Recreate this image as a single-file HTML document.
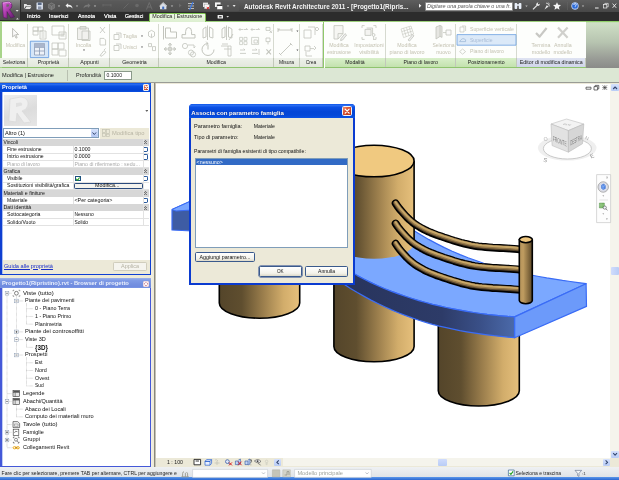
<!DOCTYPE html>
<html><head><meta charset="utf-8">
<style>
*{margin:0;padding:0;box-sizing:border-box}
html,body{width:619px;height:480px;overflow:hidden;background:#fff}
body{font-family:"Liberation Sans",sans-serif;font-size:5.6px;color:#111;position:relative}
.a{position:absolute}
.t{position:absolute;white-space:nowrap;line-height:7px;height:7px}
.g{color:#b9bdb4}
.w{color:#f2f2f2}
#title{left:0;top:0;width:619px;height:12px;background:linear-gradient(#5e5e5e,#474747)}
#tabs{left:0;top:12px;width:619px;height:10px;background:#2c2c2c}
#ribbon{left:0;top:21px;width:586px;height:37px;background:#fdfefc;border-top:1px solid #9ccf7c}
#ribR{left:586px;top:21px;width:33px;height:47px;background:linear-gradient(#8fcf68 0,#8fcf68 1px,#cfe0c6 1.6px,#b7c4b0 45%,#999c96 80%,#8a8b88 100%)}
#labels{left:0;top:58px;width:586px;height:10px;background:#e4e9df;border-bottom:1px solid #8fc46e}
#opts{left:0;top:68px;width:619px;height:15px;background:#dce7d4;border-bottom:1px solid #9a9c96}
#work{left:0;top:83px;width:619px;height:384px;background:#ece9d8}
#canvas{left:156px;top:84px;width:454px;height:374px;background:#fff}
#status{left:0;top:467px;width:619px;height:10.4px;background:linear-gradient(#eff1f3,#dfe3e7)}
.btn{background:linear-gradient(#fff,#f3f2ea 70%,#dcd8c8);border:.6px solid #3a5a8c;border-radius:1.6px}
#bline{left:0;top:477.2px;width:619px;height:2.8px;background:linear-gradient(#5b97ea,#2a66d0)}
#root{position:absolute;left:0;top:0;width:619px;height:480px;overflow:hidden;transform:translateZ(0);will-change:transform;background:transparent}
</style></head><body><div id="root">
<div class="a" id="title"></div>
<div class="a" id="tabs"></div>
<div class="a" id="ribbon"></div>
<div class="a" id="ribR"></div>
<div class="a" id="labels"></div>
<div class="a" id="opts"></div>
<div class="a" id="work"></div>
<div class="a" id="canvas"></div>
<!--SCENE-->
<svg class="a" style="left:0;top:0" width="619" height="480" viewBox="0 0 619 480">
<defs>
<linearGradient id="cy" x1="0" x2="1" y1="0" y2="0"><stop offset="0" stop-color="#54452a"/><stop offset=".28" stop-color="#5f4e2f"/><stop offset=".55" stop-color="#9c7f4d"/><stop offset=".8" stop-color="#d2ad6b"/><stop offset="1" stop-color="#e6c07c"/></linearGradient>
<linearGradient id="sd" gradientUnits="userSpaceOnUse" x1="340" x2="516" y1="0" y2="0"><stop offset="0" stop-color="#28345c"/><stop offset=".58" stop-color="#2d3b68"/><stop offset=".8" stop-color="#3a5088"/><stop offset="1" stop-color="#4c6bab"/></linearGradient>
<linearGradient id="po" x1="0" x2="1" y1="0" y2="0"><stop offset="0" stop-color="#b4925a"/><stop offset=".3" stop-color="#bf9c60"/><stop offset="1" stop-color="#5c4828"/></linearGradient>
<clipPath id="cv"><rect x="156" y="84" width="454.4" height="374"/></clipPath>

</defs>
<g clip-path="url(#cv)" stroke-linejoin="round">
<!-- slab left end -->
<path d="M172,209.5 L192,200.5 L192,231 L172,230 Z" fill="#3e5ca4" stroke="#3a6cf6" stroke-width="1.2"/>
<path d="M172,209.5 L192,200.5 L192,210 L176,211 Z" fill="#79a6ff" stroke="#3a6cf6" stroke-width="1"/>
<!-- cyl 1 -->
<path d="M219.3,270 L219.3,303 A40.2,15.2 0 0 0 299.7,303 L299.7,270 Z" fill="url(#cy)" stroke="#000" stroke-width="1.6"/>
<!-- cyl 2 lower -->
<path d="M333.9,270 L333.9,346.5 A40.1,15.2 0 0 0 414.1,346.5 L414.1,290 Z" fill="url(#cy)" stroke="#000" stroke-width="1.6"/>
<!-- cyl 3 -->
<path d="M438.3,310 L438.3,390.8 A40.5,15.2 0 0 0 519.3,390.8 L519.3,320 Z" fill="url(#cy)" stroke="#000" stroke-width="1.6"/>
<!-- slab top -->
<path d="M330.0,258.5 L336.8,263.2 L343.7,267.6 L350.5,271.8 L357.3,275.6 L364.2,279.2 L371.0,282.6 L377.8,285.7 L384.7,288.7 L391.5,291.4 L398.3,293.9 L405.2,296.3 L412.0,298.5 L418.8,300.6 L425.7,302.5 L432.5,304.3 L439.3,305.9 L446.2,307.5 L453.0,308.9 L459.8,310.2 L466.7,311.4 L473.5,312.5 L480.3,313.5 L487.2,314.4 L494.0,315.1 L500.8,315.8 L507.7,316.4 L514.5,316.8 L586.1,283.7 L578.2,282.6 L570.4,281.5 L562.5,280.4 L554.6,279.1 L546.7,277.9 L538.9,276.5 L531.0,275.0 L523.1,273.4 L515.2,271.7 L507.4,269.8 L499.5,267.8 L491.6,265.6 L483.7,263.2 L475.9,260.5 L468.0,257.7 L460.1,254.6 L452.2,251.2 L444.4,247.6 L436.5,243.6 L428.6,239.4 L420.7,234.8 L412.9,229.9 L405.0,224.6 L330,200 Z" fill="#7ba8ff" stroke="#3a6cf6" stroke-width="1.2"/>
<!-- slab side -->
<path d="M330.0,258.5 L336.8,263.2 L343.7,267.6 L350.5,271.8 L357.3,275.6 L364.2,279.2 L371.0,282.6 L377.8,285.7 L384.7,288.7 L391.5,291.4 L398.3,293.9 L405.2,296.3 L412.0,298.5 L418.8,300.6 L425.7,302.5 L432.5,304.3 L439.3,305.9 L446.2,307.5 L453.0,308.9 L459.8,310.2 L466.7,311.4 L473.5,312.5 L480.3,313.5 L487.2,314.4 L494.0,315.1 L500.8,315.8 L507.7,316.4 L514.5,316.8 L514.5,337.7 L507.7,337.1 L500.8,336.4 L494.0,335.7 L487.2,334.8 L480.3,333.9 L473.5,332.9 L466.7,331.8 L459.8,330.6 L453.0,329.2 L446.2,327.7 L439.3,326.1 L432.5,324.3 L425.7,322.3 L418.8,320.2 L412.0,317.9 L405.2,315.4 L398.3,312.7 L391.5,309.9 L384.7,306.8 L377.8,303.5 L371.0,300.1 L364.2,296.4 L357.3,292.5 L350.5,288.4 L343.7,284.0 L336.8,279.4 L330.0,274.6 Z" fill="url(#sd)" stroke="#3a6cf6" stroke-width="1.2"/>
<!-- slab end -->
<path d="M514.7,316.9 L586.1,283.7 L586.5,306.4 L514.7,337.8 Z" fill="#6c9afa" stroke="#3a6cf6" stroke-width="1.2"/>
<!-- cyl 2 upper -->
<path d="M333.9,161 L333.9,243 A40.1,15.8 0 0 0 414.1,243 L414.1,161 Z" fill="url(#cy)"/><path d="M333.9,161 V243.5 M414.1,161 V243.5" stroke="#000" stroke-width="1.6"/>
<ellipse cx="374" cy="161" rx="40.1" ry="15.8" fill="#f0c980" stroke="#000" stroke-width="1.6"/>
<!-- rails -->
<g fill="none" stroke-linecap="round">
<g transform="translate(0,0.0)"><path d="M395.6,203.3 L397.6,206.3 L399.7,209.1 L402.0,211.8 L404.4,214.5 L406.8,217.1 L409.4,219.6 L412.1,221.9 L414.9,224.1 L417.9,226.0 L421.0,227.8 L424.1,229.5 L427.3,231.1 L430.6,232.5 L433.9,233.8 L437.2,235.1 L440.6,236.2 L443.9,237.4 L447.3,238.5 L450.7,239.6 L454.1,240.7 L457.5,241.7 L460.9,242.7 L464.4,243.6 L467.9,244.4 L471.3,245.2 L474.8,245.8 L478.4,246.3 L481.9,246.7 L485.4,247.0 L489.0,247.3 L492.6,247.6 L496.1,247.8 L499.7,248.0 L503.3,248.2 L506.8,248.4 L510.4,248.6 L513.9,248.9 L517.5,249.2 L521.0,249.6" stroke="#000" stroke-width="7.8"/><path d="M395.6,203.3 L397.6,206.3 L399.7,209.1 L402.0,211.8 L404.4,214.5 L406.8,217.1 L409.4,219.6 L412.1,221.9 L414.9,224.1 L417.9,226.0 L421.0,227.8 L424.1,229.5 L427.3,231.1 L430.6,232.5 L433.9,233.8 L437.2,235.1 L440.6,236.2 L443.9,237.4 L447.3,238.5 L450.7,239.6 L454.1,240.7 L457.5,241.7 L460.9,242.7 L464.4,243.6 L467.9,244.4 L471.3,245.2 L474.8,245.8 L478.4,246.3 L481.9,246.7 L485.4,247.0 L489.0,247.3 L492.6,247.6 L496.1,247.8 L499.7,248.0 L503.3,248.2 L506.8,248.4 L510.4,248.6 L513.9,248.9 L517.5,249.2 L521.0,249.6" stroke="#54422a" stroke-width="4.9" transform="translate(0,-0.3)"/><path d="M395.6,203.3 L397.6,206.3 L399.7,209.1 L402.0,211.8 L404.4,214.5 L406.8,217.1 L409.4,219.6 L412.1,221.9 L414.9,224.1 L417.9,226.0 L421.0,227.8 L424.1,229.5 L427.3,231.1 L430.6,232.5 L433.9,233.8 L437.2,235.1 L440.6,236.2 L443.9,237.4 L447.3,238.5 L450.7,239.6 L454.1,240.7 L457.5,241.7 L460.9,242.7 L464.4,243.6 L467.9,244.4 L471.3,245.2 L474.8,245.8 L478.4,246.3 L481.9,246.7 L485.4,247.0 L489.0,247.3 L492.6,247.6 L496.1,247.8 L499.7,248.0 L503.3,248.2 L506.8,248.4 L510.4,248.6 L513.9,248.9 L517.5,249.2 L521.0,249.6" stroke="#96794a" stroke-width="3.5" transform="translate(0,-0.8)"/><path d="M395.6,203.3 L397.6,206.3 L399.7,209.1 L402.0,211.8 L404.4,214.5 L406.8,217.1 L409.4,219.6 L412.1,221.9 L414.9,224.1 L417.9,226.0 L421.0,227.8 L424.1,229.5 L427.3,231.1 L430.6,232.5 L433.9,233.8 L437.2,235.1 L440.6,236.2 L443.9,237.4 L447.3,238.5 L450.7,239.6 L454.1,240.7 L457.5,241.7 L460.9,242.7 L464.4,243.6 L467.9,244.4 L471.3,245.2 L474.8,245.8 L478.4,246.3 L481.9,246.7 L485.4,247.0 L489.0,247.3 L492.6,247.6 L496.1,247.8 L499.7,248.0 L503.3,248.2 L506.8,248.4 L510.4,248.6 L513.9,248.9 L517.5,249.2 L521.0,249.6" stroke="#c8a768" stroke-width="1.8" transform="translate(0,-1.4)"/></g>
<g transform="translate(0,20.2)"><path d="M395.6,203.3 L397.6,206.3 L399.7,209.1 L402.0,211.8 L404.4,214.5 L406.8,217.1 L409.4,219.6 L412.1,221.9 L414.9,224.1 L417.9,226.0 L421.0,227.8 L424.1,229.5 L427.3,231.1 L430.6,232.5 L433.9,233.8 L437.2,235.1 L440.6,236.2 L443.9,237.4 L447.3,238.5 L450.7,239.6 L454.1,240.7 L457.5,241.7 L460.9,242.7 L464.4,243.6 L467.9,244.4 L471.3,245.2 L474.8,245.8 L478.4,246.3 L481.9,246.7 L485.4,247.0 L489.0,247.3 L492.6,247.6 L496.1,247.8 L499.7,248.0 L503.3,248.2 L506.8,248.4 L510.4,248.6 L513.9,248.9 L517.5,249.2 L521.0,249.6" stroke="#000" stroke-width="7.8"/><path d="M395.6,203.3 L397.6,206.3 L399.7,209.1 L402.0,211.8 L404.4,214.5 L406.8,217.1 L409.4,219.6 L412.1,221.9 L414.9,224.1 L417.9,226.0 L421.0,227.8 L424.1,229.5 L427.3,231.1 L430.6,232.5 L433.9,233.8 L437.2,235.1 L440.6,236.2 L443.9,237.4 L447.3,238.5 L450.7,239.6 L454.1,240.7 L457.5,241.7 L460.9,242.7 L464.4,243.6 L467.9,244.4 L471.3,245.2 L474.8,245.8 L478.4,246.3 L481.9,246.7 L485.4,247.0 L489.0,247.3 L492.6,247.6 L496.1,247.8 L499.7,248.0 L503.3,248.2 L506.8,248.4 L510.4,248.6 L513.9,248.9 L517.5,249.2 L521.0,249.6" stroke="#54422a" stroke-width="4.9" transform="translate(0,-0.3)"/><path d="M395.6,203.3 L397.6,206.3 L399.7,209.1 L402.0,211.8 L404.4,214.5 L406.8,217.1 L409.4,219.6 L412.1,221.9 L414.9,224.1 L417.9,226.0 L421.0,227.8 L424.1,229.5 L427.3,231.1 L430.6,232.5 L433.9,233.8 L437.2,235.1 L440.6,236.2 L443.9,237.4 L447.3,238.5 L450.7,239.6 L454.1,240.7 L457.5,241.7 L460.9,242.7 L464.4,243.6 L467.9,244.4 L471.3,245.2 L474.8,245.8 L478.4,246.3 L481.9,246.7 L485.4,247.0 L489.0,247.3 L492.6,247.6 L496.1,247.8 L499.7,248.0 L503.3,248.2 L506.8,248.4 L510.4,248.6 L513.9,248.9 L517.5,249.2 L521.0,249.6" stroke="#96794a" stroke-width="3.5" transform="translate(0,-0.8)"/><path d="M395.6,203.3 L397.6,206.3 L399.7,209.1 L402.0,211.8 L404.4,214.5 L406.8,217.1 L409.4,219.6 L412.1,221.9 L414.9,224.1 L417.9,226.0 L421.0,227.8 L424.1,229.5 L427.3,231.1 L430.6,232.5 L433.9,233.8 L437.2,235.1 L440.6,236.2 L443.9,237.4 L447.3,238.5 L450.7,239.6 L454.1,240.7 L457.5,241.7 L460.9,242.7 L464.4,243.6 L467.9,244.4 L471.3,245.2 L474.8,245.8 L478.4,246.3 L481.9,246.7 L485.4,247.0 L489.0,247.3 L492.6,247.6 L496.1,247.8 L499.7,248.0 L503.3,248.2 L506.8,248.4 L510.4,248.6 L513.9,248.9 L517.5,249.2 L521.0,249.6" stroke="#c8a768" stroke-width="1.8" transform="translate(0,-1.4)"/></g>
<g transform="translate(0,40.4)"><path d="M395.6,203.3 L397.6,206.3 L399.7,209.1 L402.0,211.8 L404.4,214.5 L406.8,217.1 L409.4,219.6 L412.1,221.9 L414.9,224.1 L417.9,226.0 L421.0,227.8 L424.1,229.5 L427.3,231.1 L430.6,232.5 L433.9,233.8 L437.2,235.1 L440.6,236.2 L443.9,237.4 L447.3,238.5 L450.7,239.6 L454.1,240.7 L457.5,241.7 L460.9,242.7 L464.4,243.6 L467.9,244.4 L471.3,245.2 L474.8,245.8 L478.4,246.3 L481.9,246.7 L485.4,247.0 L489.0,247.3 L492.6,247.6 L496.1,247.8 L499.7,248.0 L503.3,248.2 L506.8,248.4 L510.4,248.6 L513.9,248.9 L517.5,249.2 L521.0,249.6" stroke="#000" stroke-width="7.8"/><path d="M395.6,203.3 L397.6,206.3 L399.7,209.1 L402.0,211.8 L404.4,214.5 L406.8,217.1 L409.4,219.6 L412.1,221.9 L414.9,224.1 L417.9,226.0 L421.0,227.8 L424.1,229.5 L427.3,231.1 L430.6,232.5 L433.9,233.8 L437.2,235.1 L440.6,236.2 L443.9,237.4 L447.3,238.5 L450.7,239.6 L454.1,240.7 L457.5,241.7 L460.9,242.7 L464.4,243.6 L467.9,244.4 L471.3,245.2 L474.8,245.8 L478.4,246.3 L481.9,246.7 L485.4,247.0 L489.0,247.3 L492.6,247.6 L496.1,247.8 L499.7,248.0 L503.3,248.2 L506.8,248.4 L510.4,248.6 L513.9,248.9 L517.5,249.2 L521.0,249.6" stroke="#54422a" stroke-width="4.9" transform="translate(0,-0.3)"/><path d="M395.6,203.3 L397.6,206.3 L399.7,209.1 L402.0,211.8 L404.4,214.5 L406.8,217.1 L409.4,219.6 L412.1,221.9 L414.9,224.1 L417.9,226.0 L421.0,227.8 L424.1,229.5 L427.3,231.1 L430.6,232.5 L433.9,233.8 L437.2,235.1 L440.6,236.2 L443.9,237.4 L447.3,238.5 L450.7,239.6 L454.1,240.7 L457.5,241.7 L460.9,242.7 L464.4,243.6 L467.9,244.4 L471.3,245.2 L474.8,245.8 L478.4,246.3 L481.9,246.7 L485.4,247.0 L489.0,247.3 L492.6,247.6 L496.1,247.8 L499.7,248.0 L503.3,248.2 L506.8,248.4 L510.4,248.6 L513.9,248.9 L517.5,249.2 L521.0,249.6" stroke="#96794a" stroke-width="3.5" transform="translate(0,-0.8)"/><path d="M395.6,203.3 L397.6,206.3 L399.7,209.1 L402.0,211.8 L404.4,214.5 L406.8,217.1 L409.4,219.6 L412.1,221.9 L414.9,224.1 L417.9,226.0 L421.0,227.8 L424.1,229.5 L427.3,231.1 L430.6,232.5 L433.9,233.8 L437.2,235.1 L440.6,236.2 L443.9,237.4 L447.3,238.5 L450.7,239.6 L454.1,240.7 L457.5,241.7 L460.9,242.7 L464.4,243.6 L467.9,244.4 L471.3,245.2 L474.8,245.8 L478.4,246.3 L481.9,246.7 L485.4,247.0 L489.0,247.3 L492.6,247.6 L496.1,247.8 L499.7,248.0 L503.3,248.2 L506.8,248.4 L510.4,248.6 L513.9,248.9 L517.5,249.2 L521.0,249.6" stroke="#c8a768" stroke-width="1.8" transform="translate(0,-1.4)"/></g>
</g>
<!-- post -->
<path d="M519.3,239.6 L519.3,300.6 A6.5,3.1 0 0 0 532.3,300.6 L532.3,239.6 Z" fill="url(#po)" stroke="#000" stroke-width="1.6"/>
<ellipse cx="525.8" cy="239.6" rx="6.5" ry="3.1" fill="#eec67e" stroke="#000" stroke-width="1.6"/>
</g>
</svg>
<!--/SCENE-->
<!--LEFT-->
<div class="a" style="left:0;top:83px;width:151.4px;height:192.4px;background:#0f3fd2"></div>
<div class="a" style="left:0;top:83px;width:151.5px;height:9px;background:linear-gradient(#0b55e6,#2a6cf0 15%,#0a4fe0 35%,#0344d4 80%,#0a50e2)"></div>
<div class="a" style="left:2px;top:92px;width:148px;height:182px;background:#fff;border-left:.8px solid #a9bdf0"></div>
<div class="a" style="left:2.8px;top:260.3px;width:147.2px;height:13.7px;background:#ece9d8"></div>
<div class="a" style="left:142.6px;top:84.2px;width:6.8px;height:6.6px;border-radius:1px;background:linear-gradient(135deg,#ee9072,#d84e2c 45%,#b8381a);border:.5px solid #f0f0f0"></div>
<svg class="a" style="left:142.6px;top:84.2px" width="6.8" height="6.6" viewBox="0 0 6.8 6.6"><path d="M2,1.9 L4.8,4.7 M4.8,1.9 L2,4.7" stroke="#fff" stroke-width="1.2" stroke-linecap="round"/></svg>
<div class="a" style="left:4px;top:94.5px;width:32.8px;height:31.5px;background:linear-gradient(160deg,#eeeeee,#dcdcdc 55%,#e6e6e6)"></div>
<svg class="a" style="left:4px;top:94.5px" width="32.8" height="31.5" viewBox="0 0 32.8 31.5"><path d="M6,4 L17,2 Q25,3 24,10 Q23,15 18,16 L27,27 L20,28 L13,18 L12,27 L5,26 Z" fill="#efefef" stroke="#d8d8d8" stroke-width=".7"/><path d="M12,8 L17,7.5 Q19,8.5 18,10.5 L12,12 Z" fill="#e0e0e0"/></svg>
<svg class="a" style="left:144.5px;top:109.6px" width="3.6" height="2.4" viewBox="0 0 3.6 2.4"><path d="M.3,0 L3.3,0 L1.8,1.9 Z" fill="#666"/></svg>
<div class="a" style="left:3px;top:128px;width:96px;height:10.2px;background:#fff;border:.6px solid #7f9db9"></div>
<div class="a" style="left:91px;top:129px;width:7.4px;height:8.2px;border-radius:1px;background:linear-gradient(#d6e2fc,#b4c8f4)"></div>
<svg class="a" style="left:92.4px;top:131.6px" width="4.6" height="3.2" viewBox="0 0 4.6 3.2"><path d="M.5,.5 L2.3,2.5 L4.1,.5" fill="none" stroke="#33466e" stroke-width="1"/></svg>
<div class="a" style="left:100px;top:127.5px;width:49px;height:11px;background:#ece9d8"></div>
<svg class="a" style="left:102.4px;top:129px" width="8" height="8" viewBox="0 0 8 8"><g fill="none" stroke="#c4c2b2" stroke-width=".7"><rect x=".5" y=".5" width="3" height="3"/><rect x="4.3" y=".5" width="3" height="4"/><rect x=".5" y="4.3" width="3" height="3"/><rect x="4.3" y="5.2" width="3" height="2.2"/></g></svg>
<div class="a" style="left:3px;top:138.75px;width:145.6px;height:87.00px;background:#fff"></div>
<div class="a" style="left:3px;top:138.75px;width:145.6px;height:7.25px;background:#d7d7d7"></div>
<svg class="a" style="left:143.6px;top:140.25px" width="3" height="4.4" viewBox="0 0 3 4.4"><path d="M.2,2 L1.5,.5 L2.8,2 M.2,4 L1.5,2.5 L2.8,4" fill="none" stroke="#222" stroke-width=".6"/></svg>
<div class="a" style="left:3px;top:152.75px;width:145.6px;height:.5px;background:#e2e2e2"></div>
<div class="a" style="left:143.6px;top:146.80px;width:4.6px;height:5.6px;background:#fff;border:.7px solid #2a5a9c;border-left:none;border-radius:0 1.8px 1.8px 0"></div>
<div class="a" style="left:3px;top:160.00px;width:145.6px;height:.5px;background:#e2e2e2"></div>
<div class="a" style="left:143.6px;top:154.05px;width:4.6px;height:5.6px;background:#fff;border:.7px solid #2a5a9c;border-left:none;border-radius:0 1.8px 1.8px 0"></div>
<div class="a" style="left:3px;top:167.25px;width:145.6px;height:.5px;background:#e2e2e2"></div>
<div class="a" style="left:3px;top:167.75px;width:145.6px;height:7.25px;background:#d7d7d7"></div>
<svg class="a" style="left:143.6px;top:169.25px" width="3" height="4.4" viewBox="0 0 3 4.4"><path d="M.2,2 L1.5,.5 L2.8,2 M.2,4 L1.5,2.5 L2.8,4" fill="none" stroke="#222" stroke-width=".6"/></svg>
<div class="a" style="left:3px;top:181.75px;width:145.6px;height:.5px;background:#e2e2e2"></div>
<div class="a" style="left:74.8px;top:175.70px;width:5.8px;height:5.8px;background:#fff;border:.6px solid #1c5180"></div>
<svg class="a" style="left:74.8px;top:175.70px" width="5.8" height="5.8" viewBox="0 0 5.8 5.8"><path d="M1.3,2.9 L2.5,4.3 L4.6,1.5" fill="none" stroke="#21a121" stroke-width="1.1"/></svg>
<div class="a" style="left:143.6px;top:175.80px;width:4.6px;height:5.6px;background:#fff;border:.7px solid #2a5a9c;border-left:none;border-radius:0 1.8px 1.8px 0"></div>
<div class="a" style="left:3px;top:189.00px;width:145.6px;height:.5px;background:#e2e2e2"></div>
<div class="a" style="left:74px;top:182.95px;width:68.5px;height:5.9px;background:#f4f3ee;border:.6px solid #2a4a7c;border-radius:1.2px"></div>
<div class="a" style="left:3px;top:189.50px;width:145.6px;height:7.25px;background:#d7d7d7"></div>
<svg class="a" style="left:143.6px;top:191.00px" width="3" height="4.4" viewBox="0 0 3 4.4"><path d="M.2,2 L1.5,.5 L2.8,2 M.2,4 L1.5,2.5 L2.8,4" fill="none" stroke="#222" stroke-width=".6"/></svg>
<div class="a" style="left:3px;top:203.50px;width:145.6px;height:.5px;background:#e2e2e2"></div>
<div class="a" style="left:143.6px;top:197.55px;width:4.6px;height:5.6px;background:#fff;border:.7px solid #2a5a9c;border-left:none;border-radius:0 1.8px 1.8px 0"></div>
<div class="a" style="left:3px;top:204.00px;width:145.6px;height:7.25px;background:#d7d7d7"></div>
<svg class="a" style="left:143.6px;top:205.50px" width="3" height="4.4" viewBox="0 0 3 4.4"><path d="M.2,2 L1.5,.5 L2.8,2 M.2,4 L1.5,2.5 L2.8,4" fill="none" stroke="#222" stroke-width=".6"/></svg>
<div class="a" style="left:3px;top:218.00px;width:145.6px;height:.5px;background:#e2e2e2"></div>
<div class="a" style="left:3px;top:225.25px;width:145.6px;height:.5px;background:#e2e2e2"></div>
<div class="a" style="left:73.2px;top:138.75px;width:.5px;height:87.00px;background:#e2e2e2"></div>
<div class="a" style="left:73px;top:138.75px;width:1px;height:7.25px;background:#d7d7d7"></div>
<div class="a" style="left:73px;top:167.75px;width:1px;height:7.25px;background:#d7d7d7"></div>
<div class="a" style="left:73px;top:189.50px;width:1px;height:7.25px;background:#d7d7d7"></div>
<div class="a" style="left:73px;top:204.00px;width:1px;height:7.25px;background:#d7d7d7"></div>
<div class="a" style="left:142.8px;top:138.75px;width:.5px;height:87.00px;background:#e2e2e2"></div>
<div class="a" style="left:113px;top:262px;width:34px;height:8.6px;background:#f5f4ee;border:.6px solid #d0cdbd;border-radius:1.2px"></div>
<div class="a" style="left:0;top:278.2px;width:151.4px;height:188.8px;background:#4458d8"></div>
<div class="a" style="left:0;top:278.2px;width:151.4px;height:10.2px;background:linear-gradient(#9db2ea,#7f9be6 22%,#7490e0 60%,#6f8be0 85%,#7a96e4)"></div>
<div class="a" style="left:2px;top:288.4px;width:148px;height:178px;background:#fff;border-left:.8px solid #c0ccf4"></div>
<div class="a" style="left:143px;top:281.2px;width:5.8px;height:5.6px;border-radius:1px;background:#c67a8c;border:.4px solid #ecd8e0"></div>
<svg class="a" style="left:143px;top:281.2px" width="5.8" height="5.6" viewBox="0 0 5.8 5.6"><path d="M1.5,1.4 L4.4,4.3 M4.4,1.4 L1.5,4.3" stroke="#fff" stroke-width="1.2" stroke-linecap="round"/></svg>
<svg class="a" style="left:0;top:0" width="152" height="480" viewBox="0 0 152 480"><g stroke="#9a9a9a" stroke-width=".5" stroke-dasharray=".6 .6" fill="none"><path d="M7,295.25 V447.75"/><path d="M16.5,296.25 V355.05"/><path d="M26.5,302.98 V324.15"/><path d="M26.5,341.60 V347.32"/><path d="M26.5,357.05 V385.95"/><path d="M16.5,404.40 V416.85"/><path d="M7,293.25 H12"/><path d="M16.5,300.98 H23.5"/><path d="M26.5,308.70 H33.5"/><path d="M26.5,316.43 H33.5"/><path d="M26.5,324.15 H33.5"/><path d="M16.5,331.88 H23.5"/><path d="M16.5,339.60 H23.5"/><path d="M26.5,347.32 H33.5"/><path d="M16.5,355.05 H23.5"/><path d="M26.5,362.77 H33.5"/><path d="M26.5,370.50 H33.5"/><path d="M26.5,378.23 H33.5"/><path d="M26.5,385.95 H33.5"/><path d="M7,393.68 H12"/><path d="M7,401.40 H12"/><path d="M16.5,409.12 H23.5"/><path d="M16.5,416.85 H23.5"/><path d="M7,424.57 H12"/><path d="M7,432.30 H12"/><path d="M7,440.02 H12"/><path d="M7,447.75 H12"/></g><rect x="5.20" y="291.45" width="3.6" height="3.6" fill="#fff" stroke="#8a9ab0" stroke-width=".5"/><path d="M6.00,293.25 h2" stroke="#111" stroke-width=".5"/><circle cx="16.4" cy="293.25" r="1.9" fill="#fff" stroke="#333" stroke-width=".6"/><path d="M13,290.25 h1.2 M18.6,290.25 h1.2 M13,296.25 h1.2 M18.6,296.25 h1.2 M13,290.25 v1 M19.8,290.25 v1 M13,295.25 v1 M19.8,295.25 v1" stroke="#444" stroke-width=".5"/><rect x="14.70" y="299.18" width="3.6" height="3.6" fill="#fff" stroke="#8a9ab0" stroke-width=".5"/><path d="M15.50,300.98 h2" stroke="#111" stroke-width=".5"/><rect x="14.70" y="330.07" width="3.6" height="3.6" fill="#fff" stroke="#8a9ab0" stroke-width=".5"/><path d="M15.50,331.88 h2" stroke="#111" stroke-width=".5"/><path d="M16.50,330.88 v2" stroke="#111" stroke-width=".5"/><rect x="14.70" y="337.80" width="3.6" height="3.6" fill="#fff" stroke="#8a9ab0" stroke-width=".5"/><path d="M15.50,339.60 h2" stroke="#111" stroke-width=".5"/><rect x="14.70" y="353.25" width="3.6" height="3.6" fill="#fff" stroke="#8a9ab0" stroke-width=".5"/><path d="M15.50,355.05 h2" stroke="#111" stroke-width=".5"/><rect x="13" y="390.68" width="6.6" height="6" fill="#e8e8e8" stroke="#333" stroke-width=".6"/><path d="M13,392.48 h6.6 M15.2,392.48 v4.2" stroke="#333" stroke-width=".5"/><rect x="13.3" y="390.88" width="6" height="1.4" fill="#555"/><rect x="5.20" y="399.60" width="3.6" height="3.6" fill="#fff" stroke="#8a9ab0" stroke-width=".5"/><path d="M6.00,401.40 h2" stroke="#111" stroke-width=".5"/><rect x="13" y="398.40" width="6.6" height="6" fill="#e8e8e8" stroke="#333" stroke-width=".6"/><path d="M13,400.20 h6.6 M15.2,400.20 v4.2" stroke="#333" stroke-width=".5"/><rect x="13.3" y="398.60" width="6" height="1.4" fill="#555"/><path d="M13,421.57 h4.6 l2,1.8 v4.2 h-6.6 Z" fill="#eee" stroke="#333" stroke-width=".6"/><path d="M14.5,423.97 h3.6 v2.4 h-3.6 Z" fill="none" stroke="#555" stroke-width=".4"/><rect x="5.20" y="430.50" width="3.6" height="3.6" fill="#fff" stroke="#8a9ab0" stroke-width=".5"/><path d="M6.00,432.30 h2" stroke="#111" stroke-width=".5"/><path d="M7.00,431.30 v2" stroke="#111" stroke-width=".5"/><rect x="13.2" y="429.20" width="5.6" height="6.2" fill="#fff" stroke="#333" stroke-width=".6"/><path d="M14.4,432.90 l1.2,-1.6 l1.8,.4" fill="none" stroke="#333" stroke-width=".6"/><rect x="5.20" y="438.22" width="3.6" height="3.6" fill="#fff" stroke="#8a9ab0" stroke-width=".5"/><path d="M6.00,440.02 h2" stroke="#111" stroke-width=".5"/><path d="M7.00,439.02 v2" stroke="#111" stroke-width=".5"/><path d="M13.4,437.02 h1.2 M13.4,437.02 v1.2 M19,437.02 h-1.2 M19,437.02 v1.2 M13.4,443.02 h1.2 M13.4,443.02 v-1.2 M19,443.02 h-1.2 M19,443.02 v-1.2" stroke="#333" stroke-width=".6" fill="none"/><circle cx="16" cy="439.72" r="1.5" fill="none" stroke="#444" stroke-width=".6"/><path d="M17,440.82 l1.4,1.6" stroke="#444" stroke-width=".6"/><ellipse cx="14.6" cy="447.75" rx="1.6" ry="1.1" fill="none" stroke="#e8a000" stroke-width=".9"/><ellipse cx="17.8" cy="447.75" rx="1.6" ry="1.1" fill="none" stroke="#e8a000" stroke-width=".9"/><path d="M15,447.75 h2.6" stroke="#b87800" stroke-width=".7"/></svg>
<div class="t" style="left:2.00px;top:83.90px;font-size:5.69px;font-weight:bold;color:#fff;">Proprietà</div>
<div class="t" style="left:5.00px;top:129.60px;font-size:5.62px;">Altro (1)</div>
<div class="t" style="left:112.00px;top:129.60px;font-size:5.79px;color:#b8b5a4;">Modifica tipo</div>
<div class="t" style="left:3.50px;top:138.78px;font-size:4.95px;">Vincoli</div>
<div class="t" style="left:7.00px;top:146.03px;font-size:5.05px;">Fine estrusione</div>
<div class="t" style="left:74.50px;top:146.03px;font-size:5.23px;">0.1000</div>
<div class="t" style="left:7.00px;top:153.28px;font-size:5.09px;">Inizio estrusione</div>
<div class="t" style="left:74.50px;top:153.28px;font-size:5.23px;">0.0000</div>
<div class="t" style="left:7.00px;top:160.53px;font-size:4.99px;color:#aaa;">Piano di lavoro</div>
<div class="t" style="left:74.50px;top:160.53px;font-size:5.26px;color:#aaa;">Piano di riferimento : sedu...</div>
<div class="t" style="left:3.50px;top:167.78px;font-size:5.12px;">Grafica</div>
<div class="t" style="left:7.00px;top:175.03px;font-size:4.92px;">Visibile</div>
<div class="t" style="left:7.00px;top:182.28px;font-size:5.13px;">Sostituzioni visibilità/grafica</div>
<div class="t" style="left:95.00px;top:182.08px;font-size:5.38px;">Modifica...</div>
<div class="t" style="left:3.50px;top:189.53px;font-size:5.26px;">Materiali e finiture</div>
<div class="t" style="left:7.00px;top:196.78px;font-size:4.98px;">Materiale</div>
<div class="t" style="left:74.50px;top:196.78px;font-size:5.34px;">&lt;Per categoria&gt;</div>
<div class="t" style="left:3.50px;top:204.03px;font-size:5.25px;">Dati identità</div>
<div class="t" style="left:7.00px;top:211.28px;font-size:5.19px;">Sottocategoria</div>
<div class="t" style="left:74.50px;top:211.28px;font-size:4.90px;">Nessuno</div>
<div class="t" style="left:7.00px;top:218.53px;font-size:5.06px;">Solido/Vuoto</div>
<div class="t" style="left:74.50px;top:218.53px;font-size:4.90px;">Solido</div>
<div class="t" style="left:4.00px;top:262.65px;font-size:5.61px;color:#1a2fc8;text-decoration:underline;">Guida alle proprietà</div>
<div class="t" style="left:121.00px;top:262.80px;font-size:5.49px;color:#b4b1a2;">Applica</div>
<div class="t" style="left:2.00px;top:280.40px;font-size:5.79px;font-weight:bold;color:#e8eefc;">Progetto1(Ripristino).rvt - Browser di progetto</div>
<div class="t" style="left:23.00px;top:289.65px;font-size:6.03px;">Viste (tutto)</div>
<div class="t" style="left:25.00px;top:297.38px;font-size:5.50px;">Piante dei pavimenti</div>
<div class="t" style="left:35.00px;top:305.10px;font-size:5.35px;">0 - Piano Terra</div>
<div class="t" style="left:35.00px;top:312.82px;font-size:5.26px;">1 - Piano Primo</div>
<div class="t" style="left:35.00px;top:320.55px;font-size:5.35px;">Planimetria</div>
<div class="t" style="left:25.00px;top:328.27px;font-size:5.82px;">Piante dei controsoffitti</div>
<div class="t" style="left:25.00px;top:336.00px;font-size:5.51px;">Viste 3D</div>
<div class="t" style="left:35.00px;top:343.72px;font-size:6.30px;font-weight:bold;">{3D}</div>
<div class="t" style="left:25.00px;top:351.45px;font-size:5.70px;">Prospetti</div>
<div class="t" style="left:35.00px;top:359.17px;font-size:5.19px;">Est</div>
<div class="t" style="left:35.00px;top:366.90px;font-size:5.42px;">Nord</div>
<div class="t" style="left:35.00px;top:374.62px;font-size:5.45px;">Ovest</div>
<div class="t" style="left:35.00px;top:382.35px;font-size:4.92px;">Sud</div>
<div class="t" style="left:23.00px;top:390.07px;font-size:5.52px;">Legende</div>
<div class="t" style="left:23.00px;top:397.80px;font-size:5.55px;">Abachi/Quantità</div>
<div class="t" style="left:25.00px;top:405.52px;font-size:5.55px;">Abaco dei Locali</div>
<div class="t" style="left:25.00px;top:413.25px;font-size:5.60px;">Computo dei materiali muro</div>
<div class="t" style="left:23.00px;top:420.97px;font-size:5.97px;">Tavole (tutto)</div>
<div class="t" style="left:23.00px;top:428.70px;font-size:5.49px;">Famiglie</div>
<div class="t" style="left:23.00px;top:436.42px;font-size:5.66px;">Gruppi</div>
<div class="t" style="left:23.00px;top:444.15px;font-size:5.51px;">Collegamenti Revit</div>
<!--/LEFT-->
<!--DIALOG-->
<div class="a" id="dlg" style="left:189px;top:104px;width:166px;height:180.5px;background:#0b3bd0;border-radius:4px 4px 0 0">
<div class="a" style="left:0;top:0;width:166px;height:14px;border-radius:4px 4px 0 0;background:linear-gradient(#0d55ea 0%,#2a6df2 10%,#0b50e4 24%,#0345d6 55%,#0347d8 80%,#0a52e4 100%)"></div>
<div class="a" style="left:1.7px;top:13.6px;width:162.6px;height:165.2px;background:#ece9d8"></div>
<div class="a" style="left:153px;top:2.3px;width:10.3px;height:10.2px;border-radius:1.6px;background:linear-gradient(135deg,#ee9072,#d84e2c 45%,#b8381a);border:.6px solid #f4f4f4"></div>
<svg class="a" style="left:153px;top:2.3px" width="10.3" height="10.2" viewBox="0 0 10.3 10.2"><path d="M3.2,3.1 L7.1,7.1 M7.1,3.1 L3.2,7.1" stroke="#fff" stroke-width="1.3" stroke-linecap="round"/></svg>
<div class="a" style="left:5.6px;top:54px;width:153.8px;height:89.7px;background:#fff;border:.6px solid #7f9db9"></div>
<div class="a" style="left:6.6px;top:55.3px;width:151.8px;height:5.8px;background:#316ac5"></div>
<div class="a btn" style="left:6px;top:147.6px;width:60px;height:10.8px"></div>
<div class="a btn" style="left:70px;top:162.3px;width:42.5px;height:10.7px;box-shadow:0 0 0 .5px #1c3f8a"></div>
<div class="a btn" style="left:116px;top:162.3px;width:43px;height:10.7px"></div>
<div class="t" style="left:2.30px;top:4.60px;font-size:6.14px;font-weight:bold;color:#fff;text-shadow:.4px .4px 0 #0a2a8a;">Associa con parametro famiglia</div>
<div class="t" style="left:5.00px;top:19.40px;font-size:5.57px;">Parametro famiglia:</div>
<div class="t" style="left:64.70px;top:19.40px;font-size:5.15px;">Materiale</div>
<div class="t" style="left:5.00px;top:29.80px;font-size:5.51px;">Tipo di parametro:</div>
<div class="t" style="left:64.70px;top:29.80px;font-size:5.15px;">Materiale</div>
<div class="t" style="left:5.00px;top:44.20px;font-size:5.18px;">Parametri di famiglia esistenti di tipo compatibile:</div>
<div class="t" style="left:7.60px;top:54.70px;font-size:5.31px;color:#fff;">&lt;nessuno&gt;</div>
<div class="t" style="left:10.55px;top:149.50px;font-size:5.32px;">Aggiungi parametro...</div>
<div class="t" style="left:87.98px;top:164.20px;font-size:4.60px;">OK</div>
<div class="t" style="left:129.00px;top:164.20px;font-size:5.10px;">Annulla</div>
</div>
<!--/DIALOG-->
<!--RIBBONCONTENT-->
<div class="a" style="left:0;top:0;width:20.5px;height:21.4px;background:linear-gradient(#8c8c8c 0%,#707070 30%,#565656 60%,#4c4c4c 100%);border-right:.6px solid #2a2a2a;border-bottom:.6px solid #2a2a2a"></div>
<svg class="a" style="left:0;top:0" width="21" height="22" viewBox="0 0 21 22"><defs><linearGradient id="rg" x1="0" y1="0" x2="1" y2="1"><stop offset="0" stop-color="#e070e0"/><stop offset=".5" stop-color="#a838a8"/><stop offset="1" stop-color="#5a1c66"/></linearGradient></defs><path d="M2.2,2.6 L8.4,1.6 Q12.2,2 12,5.8 Q11.8,8.6 9.6,9.6 L14.6,16.8 L10.8,18 L7,11.6 L7.2,18.4 L3.4,17.4 Z" fill="url(#rg)" stroke="#4a1456" stroke-width=".5"/><path d="M6.4,4.4 L8.4,4.2 Q9.4,4.8 9,6.2 L6.6,7 Z" fill="#6a6a6a"/><path d="M3,3 L8.4,2.2 Q10.6,2.4 11.2,4" stroke="#f4b4f4" stroke-width=".7" fill="none"/><path d="M15.6,10 h3 l-1.5,1.8 Z" fill="#e8e8e8"/><path d="M16,19.6 l1.4,-1.8 l1.4,1.8 Z" fill="#ccc"/></svg>
<svg class="a" style="left:0;top:0" width="619" height="22" viewBox="0 0 619 22"><rect x="21.4" y=".8" width="218" height="10.4" rx="2" fill="#585858" opacity=".55"/><path d="M24,8.5 v-4.5 h2.4 l.8,1 h3.6 v1 h-5 l-1.6,2.5 Z M25,9 l1.6,-2.6 h5 l-1.6,2.6 Z" fill="#e6e6e6"/><rect x="36.5" y="2.5" width="6.4" height="7" rx=".6" fill="#dfe6f2"/><rect x="37.8" y="2.5" width="3.8" height="2.6" fill="#5a6a86"/><rect x="38" y="6.4" width="3.4" height="3" fill="#8a94a8"/><path d="M48.5,4.5 l3,-1.6 l3,1.6 v3.6 l-3,1.6 l-3,-1.6 Z M48.5,4.5 l3,1.5 l3,-1.5 M51.5,6 v3.7" fill="#6e6e6e" stroke="#8c8c8c" stroke-width=".5"/><path d="M57.8,5.5 h2.4 l-1.2,1.5 Z" fill="#bbb"/><path d="M75.8,5.5 h2.4 l-1.2,1.5 Z" fill="#bbb"/><path d="M93.8,5.5 h2.4 l-1.2,1.5 Z" fill="#bbb"/><path d="M170.8,5.5 h2.4 l-1.2,1.5 Z" fill="#bbb"/><path d="M226.8,5.5 h2.4 l-1.2,1.5 Z" fill="#bbb"/><path d="M581.8,5.5 h2.4 l-1.2,1.5 Z" fill="#bbb"/><path d="M525.3,5.5 h2.4 l-1.2,1.5 Z" fill="#bbb"/><path d="M65.5,5.6 l2.6,-2.4 v1.5 q4.2,-.2 4.4,3.8 q-1.2,-2.2 -4.4,-2 v1.5 Z" fill="#f0f0f0"/><path d="M90.5,5.6 l-2.6,-2.4 v1.5 q-4.2,-.2 -4.4,3.8 q1.2,-2.2 4.4,-2 v1.5 Z" fill="#777"/><path d="M103,5 h8 M103,4 v2.6 M111,4 v2.6" stroke="#6a6a6a" stroke-width=".8" fill="none"/><path d="M123.5,8.5 l5,-5" stroke="#6a6a6a" stroke-width=".9"/><circle cx="137" cy="5.5" r="1.8" fill="#6a6a6a"/><path d="M146.5,9.5 l2.8,-7 l2.8,7 M147.6,7 h3.4" stroke="#707070" stroke-width=".9" fill="none"/><path d="M160,6 l3.2,-3 l3.2,3 v3.2 h-6.4 Z" fill="#d8dde6"/><path d="M159.4,6.2 l3.8,-3.6 l3.8,3.6" stroke="#fff" stroke-width=".7" fill="none"/><rect x="162.2" y="6.6" width="2" height="2.6" fill="#3c6cc0"/><path d="M179,3.6 l2.6,2 l-2.6,2 Z" fill="#6c6c6c"/><path d="M188,3.5 h6 M188,6 h6 M188,8.5 h6" stroke="#e8e8e8" stroke-width=".7"/><path d="M189.6,10 l3.4,-8" stroke="#3a7ae8" stroke-width="1.1"/><rect x="203" y="2.6" width="5" height="4.4" fill="#e6e6e6"/><rect x="204.4" y="4.4" width="5" height="4.4" fill="#fafafa" stroke="#888" stroke-width=".3"/><path d="M206.6,6.8 l2.6,2.6 M209.2,6.8 l-2.6,2.6" stroke="#e02020" stroke-width=".9"/><rect x="215" y="2.4" width="5.6" height="4.6" fill="#f4f4f4"/><rect x="217" y="4.8" width="5.6" height="4.6" fill="#fff" stroke="#555" stroke-width=".4"/><rect x="217" y="4.8" width="5.6" height="1.2" fill="#333"/><path d="M232.6,5 h3 l-1.5,2 Z" fill="#e8e8e8"/><path d="M419,3.8 l2.4,2 l-2.4,2 Z" fill="#f0f0f0"/><g fill="#e8eef8"><rect x="514.6" y="3" width="2.6" height="6" rx=".8"/><rect x="518.8" y="3" width="2.6" height="6" rx=".8"/><rect x="516.8" y="4.2" width="2.4" height="1.6"/></g><path d="M533,9.4 l4,-4" stroke="#e8e8e8" stroke-width="1.3"/><circle cx="538" cy="4.2" r="1.7" fill="#e8e8e8"/><circle cx="538.8" cy="3.4" r=".9" fill="#4a4a4a"/><path d="M544.5,9.5 l2.2,-4.2 l2,1.2 Z" fill="#e8e8e8"/><path d="M546,3 q3,.4 3.6,3.4" stroke="#e8e8e8" stroke-width=".8" fill="none"/><path d="M547.8,2.4 l2.2,2" stroke="#e8e8e8" stroke-width=".6"/><path d="M557,2.2 l1.2,2.6 l2.8,.3 l-2.1,1.9 l.6,2.8 l-2.5,-1.5 l-2.5,1.5 l.6,-2.8 l-2.1,-1.9 l2.8,-.3 Z" fill="#f4f4f4"/><path d="M567.5,2 v8" stroke="#666" stroke-width=".5"/><circle cx="575" cy="6" r="3.4" fill="#2a6ad8" stroke="#e8eefc" stroke-width=".7"/><path d="M573.8,5 q0,-1.4 1.3,-1.4 q1.3,0 1.2,1.2 q-.1,.8 -1.2,1.4 v.6" stroke="#fff" stroke-width=".8" fill="none"/><circle cx="575.1" cy="8.1" r=".45" fill="#fff"/><path d="M595,8 h3.6" stroke="#eee" stroke-width="1"/><rect x="603.4" y="4.6" width="3.4" height="3.4" fill="none" stroke="#eee" stroke-width=".7"/><path d="M604.8,4.6 v-1.2 h3.4 v3.4 h-1.4" fill="none" stroke="#eee" stroke-width=".7"/><path d="M612.6,3.6 l3.6,4.2 M616.2,3.6 l-3.6,4.2" stroke="#eee" stroke-width=".9"/><rect x="217.6" y="15" width="5.4" height="3.6" rx=".6" fill="#eee"/><rect x="219" y="16.2" width="2.6" height="1.2" fill="#333"/><path d="M226.4,16 h2.6 l-1.3,1.6 Z" fill="#ddd"/></svg>
<div class="a" style="left:425px;top:1.6px;width:87.5px;height:9.4px;background:#fff;border:.6px solid #8a8a8a;border-radius:1px"></div>
<div class="a" style="left:148.6px;top:12.8px;width:57px;height:9.4px;background:linear-gradient(#eef8e6,#dcefcf);border:.8px solid #80c454;border-bottom:none;border-radius:1.6px 1.6px 0 0"></div>
<div class="a" style="left:0;top:22px;width:1.6px;height:46px;background:#a8d48a"></div>
<div class="a" style="left:322.5px;top:22px;width:2px;height:46px;background:#fff"></div>
<div class="a" style="left:323.2px;top:22px;width:1.3px;height:46px;background:#8fc86a"></div>
<div class="a" style="left:0.0px;top:58.4px;width:28.0px;height:9px;background:linear-gradient(#eef1ea,#e2e7dc);border-right:.6px solid #c2c8ba"></div>
<div class="a" style="left:27.4px;top:24px;width:.6px;height:34px;background:#d6dad0"></div>
<div class="a" style="left:28.0px;top:58.4px;width:41.0px;height:9px;background:linear-gradient(#eef1ea,#e2e7dc);border-right:.6px solid #c2c8ba"></div>
<div class="a" style="left:68.4px;top:24px;width:.6px;height:34px;background:#d6dad0"></div>
<div class="a" style="left:69.0px;top:58.4px;width:41.0px;height:9px;background:linear-gradient(#eef1ea,#e2e7dc);border-right:.6px solid #c2c8ba"></div>
<div class="a" style="left:109.4px;top:24px;width:.6px;height:34px;background:#d6dad0"></div>
<div class="a" style="left:110.0px;top:58.4px;width:49.0px;height:9px;background:linear-gradient(#eef1ea,#e2e7dc);border-right:.6px solid #c2c8ba"></div>
<div class="a" style="left:158.4px;top:24px;width:.6px;height:34px;background:#d6dad0"></div>
<div class="a" style="left:159.0px;top:58.4px;width:114.5px;height:9px;background:linear-gradient(#eef1ea,#e2e7dc);border-right:.6px solid #c2c8ba"></div>
<div class="a" style="left:272.9px;top:24px;width:.6px;height:34px;background:#d6dad0"></div>
<div class="a" style="left:273.5px;top:58.4px;width:26.0px;height:9px;background:linear-gradient(#eef1ea,#e2e7dc);border-right:.6px solid #c2c8ba"></div>
<div class="a" style="left:298.9px;top:24px;width:.6px;height:34px;background:#d6dad0"></div>
<div class="a" style="left:299.5px;top:58.4px;width:23.0px;height:9px;background:linear-gradient(#eef1ea,#e2e7dc);border-right:.6px solid #c2c8ba"></div>
<div class="a" style="left:321.9px;top:24px;width:.6px;height:34px;background:#d6dad0"></div>
<div class="a" style="left:324.5px;top:58.4px;width:61.0px;height:9px;background:linear-gradient(#d9efca,#c3e2ae);border-right:.6px solid #c2c8ba"></div>
<div class="a" style="left:384.9px;top:24px;width:.6px;height:34px;background:#d6dad0"></div>
<div class="a" style="left:385.5px;top:58.4px;width:70.5px;height:9px;background:linear-gradient(#d9efca,#c3e2ae);border-right:.6px solid #c2c8ba"></div>
<div class="a" style="left:455.4px;top:24px;width:.6px;height:34px;background:#d6dad0"></div>
<div class="a" style="left:456.0px;top:58.4px;width:60.5px;height:9px;background:linear-gradient(#d9efca,#c3e2ae);border-right:.6px solid #c2c8ba"></div>
<div class="a" style="left:515.9px;top:24px;width:.6px;height:34px;background:#d6dad0"></div>
<div class="a" style="left:516.5px;top:58.4px;width:69.5px;height:9px;background:linear-gradient(#dfe3f2,#d0d5ea);border-right:.6px solid #c2c8ba"></div>
<svg class="a" style="left:0;top:0" width="619" height="70" viewBox="0 0 619 70"><g fill="none" stroke="#c2c4bc" stroke-width=".8" stroke-linejoin="round"><path d="M12.6,28.4 v8.6 l2,-1.9 l1.4,3.1 l1.2,-.6 l-1.4,-3 h2.8 Z" stroke="#aeb0a8" fill="#fafafa"/><path d="M33,27 h5 v4 h-5 Z M38,27 h5 v4 h-5 Z M33,31 h5 v4 h-5 Z M40,31 h6 v8 h-6 Z M41.5,33 h3 M41.5,35 h3 M41.5,37 h3"/><path d="M52,26 h12 v9 h-12 Z M59,32 h7 v7 h-7 Z M60.5,34 h4 M60.5,36 h4"/><path d="M52,43 h6 v6 h-6 Z M58,43 h6 v6 h-6 Z M52,49 h6 v6 h-6 Z M59,50 h7 v6 h-7 Z"/><rect x="30.3" y="41.2" width="18.4" height="16.4" fill="#d6e6f8" stroke="#5a94dc" stroke-width=".8"/><path d="M34.5,43.6 h10 v11.4 h-10 Z M34.5,47.4 h10 M34.5,51 h10 M39.5,47.4 v7.6" stroke="#8a9ab4" fill="#eef2f8"/><rect x="34.5" y="43.6" width="10" height="3.8" fill="#aab6cc" stroke="none"/><path d="M77.5,28 h11 v11.5 h-11 Z M80,26.5 h6 v2.6 h-6 Z M82,31 h8 v9.5 h-8 Z" fill="#f1f1ee"/><path d="M83,49.6 h2 l-1,1.3 Z" fill="#555" stroke="none"/><path d="M100,27 l5,6 M105,27 l-5,6"/><path d="M100,38.4 h4 l1.6,1.6 v5 h-5.6 Z"/><path d="M100,55.6 l4,-5 l2,1.6 l-4,4 Z M104,50 l1.6,-1.6"/><path d="M114,34.5 h5 v5 h-5 Z M116,33 h5 v5"/><path d="M114,45.5 h5 v5 h-5 Z M116,44 h5 v5"/><path d="M141,35.6 h2 l-1,1.3 Z M141,46.6 h2 l-1,1.3 Z" fill="#555" stroke="none"/><path d="M148.5,32 l3,-1.6 l3,1.6 v4 l-3,1.6 l-3,-1.6 Z M151.5,33.6 v4"/><path d="M148.5,43.6 h3 v3 h-3 Z M152.5,46.6 h3 v4 h-3 Z"/><path d="M163.5,26 v13.5 M165.5,28 h5 v4 h6 v6 h-11 Z" stroke-width="1"/><path d="M182,38 h13 v-3.4 h-3.4 v-3 q0,-4 -3,-4 q-3,0 -3,4 v3 h-3.6 Z" stroke-width="1"/><path d="M207.5,25.5 v14.5 M203,29 l3,-2 v10 l-3,1 Z M209.5,27 l3.4,2 v9 l-3.4,-1 Z" stroke-width=".9"/><path d="M226.5,25.5 v14.5 M222,29 l3,-2 v10 l-3,1 Z M228.5,27 l3.4,2 v9 l-3.4,-1 Z M229,40 l4,-6" stroke-width=".9"/><path d="M243.0,29.5 h-4 l1.4,-1.4 M239.0,29.5 l1.4,1.4 M243.6,29.5 h4 l-1.4,-1.4"/><path d="M255.0,29.5 h-4 l1.4,-1.4 M251.0,29.5 l1.4,1.4 M255.6,29.5 h4 l-1.4,-1.4"/><path d="M266,27.4 h4 v3 h-4 Z M269.6,30.6 l2.4,2.4 M272,30.6 l-2.4,2.4"/><path d="M239.6,37.4 h3 v3 h-3 Z M244,37.4 h3 v3 h-3 Z M239.6,41.6 h3 v3 h-3 Z M244,41.6 h3 v3 h-3 Z" stroke-width=".7"/><path d="M251.6,37.4 h7 v7 h-7 Z M254,40 h3.4 v3 h-3.4 Z" stroke-width=".7"/><path d="M266,38 h4 v3.6 h-4 Z M268,42 v2.4"/><path d="M240,50 h5 l-1.4,-1.4 M240,53.4 h6"/><path d="M252,50 h5 l-1.4,-1.4 M252,53.4 h6 M259,49 v6"/><path d="M266.4,49.4 l4.6,5 M271,49.4 l-4.6,5" stroke-width="1.1"/><path d="M170,43 v12 M164,49 h12 M170,43 l-1.6,2 h3.2 Z M170,55 l-1.6,-2 h3.2 Z M164,49 l2,-1.6 v3.2 Z M176,49 l-2,-1.6 v3.2 Z M168.4,47.4 h3.2 v3.2 h-3.2 Z" stroke-width=".8"/><circle cx="185" cy="46" r="2.6"/><circle cx="191" cy="52.6" r="2.6"/><circle cx="193" cy="54.4" r="2.6"/><path d="M188,45 h6 v3 l1.4,-1.6"/><path d="M214,49.5 a6,6 0 1 1 -6,-6 M208,43.5 l-1.8,-1.8 M208,43.5 l-1.8,1.8 M208,49.5 v-5" stroke-width="1"/><path d="M221,46 h10 v3 h-7 M228,46 v10 h3 v-7 M222,44 h6" stroke-width=".8"/><path d="M278,30 h14 M278,28 v4 M292,28 v4 M278,30 l2,-1.2 M292,30 l-2,-1.2" stroke-width=".9"/><path d="M280,55 l11,-11 M279,53 l2.4,2.4 M290,43 l2.4,2.4" stroke-width=".9"/><path d="M296.4,30.6 h2 l-1,1.3 Z M296.4,49.6 h2 l-1,1.3 Z" fill="#555" stroke="none"/><path d="M304,30 h7 v8 h-7 Z M308,27 h7 v8 M315,29 l2,-2 l2,2 l-2,2 Z"/><path d="M305,46 h5 v5 h-5 Z M310,48.6 h4 M314,46 l2,2 l-2,2 M306,52 v4 h6"/><path d="M334,25.6 h9 v8 l-5,5.4 h-4 Z M338,39 v-5.4 h5" fill="#f6f6f3"/><path d="M341,38.6 l4,-5 l1.6,1.4 l-4,5 l-2,.6 Z" fill="#eee"/><path d="M362,28 v-2.4 h2.6 M373.4,25.6 h2.6 v2.4 M362,37 v2.4 h2.6 M373.4,39.4 h2.6 v-2.4"/><path d="M365,29.4 h6 v6 h-6 Z M366.6,28 h6 v6" fill="#f4f4f1"/><circle cx="373.6" cy="35" r="1.4"/><path d="M373.6,36.4 v3.4"/><path d="M401,29 l10,-3 l2.6,8 l-10,3.6 Z M403.6,28.2 l2.6,8.4 M406.4,27.4 l2.6,8.4 M409,26.6 l2.6,8.4 M401.8,31.6 l10,-3.2 M402.6,34.4 l10,-3.4" stroke-width=".6"/><path d="M408,40 l4.6,-5.4 l1.4,1.2 l-4.4,5.2 Z" fill="#eee"/><path d="M436,27 l4,-1.6 v11 l-4,2.6 Z M440,25.4 l2,1 v11 l-2,-1" fill="#e6e6e2"/><path d="M443,32.6 h3"/><path d="M446,30 h5 v5 h-5 Z" fill="#fafafa"/><rect x="457" y="34.6" width="59" height="10.6" fill="#dbe9f8" stroke="#6aa0e0" stroke-width=".8"/><path d="M460,27 h4 v5 h-4 Z M462,26 h3.6 v5" stroke-width=".7"/><path d="M459.6,41.6 q3,-5 6,-1.6 M459.6,41.6 h6 v-2" stroke="#9ab4d4" stroke-width=".7"/><path d="M459.6,51.6 l3,-2.6 l3,2.6 l-3,2.6 Z" stroke-width=".7"/><path d="M536,33 l3.6,3.6 l7,-8.6" stroke="#c8c8c4" stroke-width="2.2"/><path d="M558,27.4 l9.6,10.4 M567.6,27.4 l-9.6,10.4" stroke="#d0d0cc" stroke-width="2.2"/></g></svg>
<div class="a" style="left:67px;top:70px;width:.6px;height:11px;background:#b8c0b0"></div>
<div class="a" style="left:103.5px;top:70.6px;width:28.6px;height:9.6px;background:#fff;border:.6px solid #8a9a8a"></div>
<div class="t" style="left:244.00px;top:2.60px;font-size:6.40px;font-weight:bold;color:#f4f4f4;">Autodesk Revit Architecture 2011 - [Progetto1(Ripris...</div>
<div class="t" style="left:427.00px;top:2.70px;font-size:5.42px;color:#555;font-style:italic;">Digitare una parola chiave o una fr.</div>
<div class="t" style="left:27.00px;top:13.00px;font-size:5.78px;color:#fafafa;text-shadow:0 0 .35px #fff;">Inizio</div>
<div class="t" style="left:49.00px;top:13.00px;font-size:5.32px;color:#fafafa;text-shadow:0 0 .35px #fff;">Inserisci</div>
<div class="t" style="left:78.00px;top:13.00px;font-size:5.36px;color:#fafafa;text-shadow:0 0 .35px #fff;">Annota</div>
<div class="t" style="left:104.00px;top:13.00px;font-size:5.67px;color:#fafafa;text-shadow:0 0 .35px #fff;">Vista</div>
<div class="t" style="left:125.00px;top:13.00px;font-size:5.20px;color:#fafafa;text-shadow:0 0 .35px #fff;">Gestisci</div>
<div class="t" style="left:152.30px;top:13.40px;font-size:5.40px;color:#222;">Modifica | Estrusione</div>
<div class="t" style="left:2.75px;top:59.40px;font-size:5.12px;color:#222;">Seleziona</div>
<div class="t" style="left:37.75px;top:59.40px;font-size:5.30px;color:#222;">Proprietà</div>
<div class="t" style="left:80.25px;top:59.40px;font-size:5.45px;color:#222;">Appunti</div>
<div class="t" style="left:122.25px;top:59.40px;font-size:5.25px;color:#222;">Geometria</div>
<div class="t" style="left:206.50px;top:59.40px;font-size:5.23px;color:#222;">Modifica</div>
<div class="t" style="left:279.00px;top:59.40px;font-size:5.00px;color:#222;">Misura</div>
<div class="t" style="left:305.75px;top:59.40px;font-size:4.84px;color:#222;">Crea</div>
<div class="t" style="left:345.25px;top:59.40px;font-size:5.16px;color:#222;">Modalità</div>
<div class="t" style="left:403.50px;top:59.40px;font-size:5.21px;color:#222;">Piano di lavoro</div>
<div class="t" style="left:467.75px;top:59.40px;font-size:5.20px;color:#222;">Posizionamento</div>
<div class="t" style="left:519.75px;top:59.40px;font-size:5.27px;color:#222;">Editor di modifica dinamica</div>
<div class="t" style="left:5.75px;top:42.00px;font-size:5.23px;color:#c4c2b2;">Modifica</div>
<div class="t" style="left:75.85px;top:42.00px;font-size:5.36px;color:#c4c2b2;">Incolla</div>
<div class="t" style="left:123.00px;top:32.60px;font-size:5.36px;color:#c4c2b2;">Taglia</div>
<div class="t" style="left:123.00px;top:43.60px;font-size:5.14px;color:#c4c2b2;">Unisci</div>
<div class="t" style="left:329.25px;top:42.00px;font-size:5.23px;color:#c4c2b2;">Modifica</div>
<div class="t" style="left:327.00px;top:48.60px;font-size:5.20px;color:#c4c2b2;">estrusione</div>
<div class="t" style="left:354.25px;top:42.00px;font-size:5.25px;color:#c4c2b2;">Impostazioni</div>
<div class="t" style="left:359.25px;top:48.60px;font-size:5.57px;color:#c4c2b2;">visibilità</div>
<div class="t" style="left:397.25px;top:42.00px;font-size:5.23px;color:#c4c2b2;">Modifica</div>
<div class="t" style="left:389.50px;top:48.60px;font-size:5.38px;color:#c4c2b2;">piano di lavoro</div>
<div class="t" style="left:432.50px;top:42.00px;font-size:5.01px;color:#c4c2b2;">Seleziona</div>
<div class="t" style="left:436.25px;top:48.60px;font-size:5.32px;color:#c4c2b2;">nuovo</div>
<div class="t" style="left:470.00px;top:26.40px;font-size:5.21px;color:#c4c2b2;">Superficie verticale</div>
<div class="t" style="left:470.00px;top:36.60px;font-size:5.06px;color:#a9bcd6;">Superficie</div>
<div class="t" style="left:470.00px;top:47.80px;font-size:5.14px;color:#c4c2b2;">Piano di lavoro</div>
<div class="t" style="left:531.50px;top:42.00px;font-size:5.34px;color:#c4c2b2;">Termina</div>
<div class="t" style="left:531.75px;top:48.60px;font-size:5.28px;color:#c4c2b2;">modello</div>
<div class="t" style="left:554.05px;top:42.00px;font-size:5.25px;color:#c4c2b2;">Annulla</div>
<div class="t" style="left:553.55px;top:48.60px;font-size:5.28px;color:#c4c2b2;">modello</div>
<div class="t" style="left:2.00px;top:72.00px;font-size:5.61px;color:#222;">Modifica | Estrusione</div>
<div class="t" style="left:76.00px;top:72.00px;font-size:5.48px;color:#222;">Profondità</div>
<div class="t" style="left:106.50px;top:72.00px;font-size:5.07px;color:#222;">0.1000</div>
<!--/RIBBONCONTENT-->
<div class="a" id="status"></div>
<div class="a" id="bline"></div>
<!--BOTTOM-->
<div class="a" style="left:151.4px;top:83px;width:4.6px;height:384px;background:linear-gradient(90deg,#f2efe2 0,#ece9d8 2.8px,#8a887c 3.2px,#8a887c 4.2px,#d8d6ca 4.6px)"></div>
<div class="a" style="left:610.4px;top:84px;width:8.6px;height:374px;background:#f5f4ec"></div>
<div class="a" style="left:611.4px;top:84.4px;width:7.4px;height:7px;background:linear-gradient(#d4e0fc,#b8ccf6);border-radius:1px"></div>
<div class="a" style="left:611.4px;top:450.6px;width:7.4px;height:7px;background:linear-gradient(#d4e0fc,#b8ccf6);border-radius:1px"></div>
<div class="a" style="left:611.4px;top:267.4px;width:7.4px;height:7.6px;background:linear-gradient(90deg,#d0dcfc,#b8ccf6);border-radius:1px"></div>
<div class="a" style="left:156px;top:458px;width:463px;height:9px;background:#ece9d8"></div>
<div class="a" style="left:283px;top:458.4px;width:327px;height:8px;background:#f5f4ec"></div>
<div class="a" style="left:437.8px;top:458.8px;width:9.6px;height:7px;background:linear-gradient(#d0dcfc,#b8ccf6);border-radius:1px"></div>
<div class="a" style="left:602.8px;top:458.8px;width:7.4px;height:7px;background:linear-gradient(#d4e0fc,#b8ccf6);border-radius:1px"></div>
<div class="a" style="left:274.4px;top:458.8px;width:7px;height:7px;background:linear-gradient(#d4e0fc,#b8ccf6);border-radius:1px"></div>
<svg class="a" style="left:0;top:0" width="619" height="480" viewBox="0 0 619 480"><g fill="none" stroke-linejoin="round"><path d="M613.2,89 l1.9,-2 l1.9,2 M613.2,453.2 l1.9,2 l1.9,-2 M605.6,460.4 l2,1.9 l-2,1.9 M278.8,460.4 l-2,1.9 l2,1.9" stroke="#33466e" stroke-width="1.1"/><rect x="586" y="87.2" width="5" height="2" fill="#fff" stroke="#333" stroke-width=".7"/><rect x="594" y="86.6" width="3.6" height="3.4" fill="#fff" stroke="#333" stroke-width=".7"/><path d="M595.2,86.6 v-1.2 h3.6 v3.4 h-1.2" stroke="#333" stroke-width=".7"/><path d="M602.6,85.4 l4.4,4.4 M607,85.4 l-4.4,4.4 M602.4,87.6 h4.8 M604.8,85.2 v4.8" stroke="#333" stroke-width=".6"/><rect x="194" y="459.4" width="6.6" height="5.4" fill="#fff" stroke="#222" stroke-width=".9"/><path d="M195.6,461 h3.4" stroke="#222" stroke-width=".9"/><path d="M205,461.4 l1.6,-1.8 h5 l-1.6,1.8 Z M205,461.4 h5 v3.8 h-5 Z M210,465.2 l1.6,-1.8 v-3.8" fill="#e8f0ff" stroke="#2a62d0" stroke-width=".7"/><path d="M215,460 q2,-1 3,1 M214.6,463 h5 M217,461 v4" stroke="#c0c0b4" stroke-width=".7"/><circle cx="227.4" cy="461.6" r="1.9" stroke="#2a50a0" stroke-width=".7" fill="#dfe8fa"/><path d="M228.6,463 l1.6,1.8" stroke="#2a50a0" stroke-width=".8"/><path d="M229,462.4 l3,3 M232,462.4 l-3,3" stroke="#e01818" stroke-width=".9"/><path d="M235.4,461 h3 v3.6 h-3 Z M238.4,460 l2,-1 v5 l-2,1" fill="#c4d4f4" stroke="#2a50a0" stroke-width=".6"/><path d="M238,461.6 l3.6,3.6 M241.6,461.6 l-3.6,3.6" stroke="#e01818" stroke-width=".9"/><path d="M245,461 h3 v3.6 h-3 Z M248,460 l2,-1 v5 l-2,1" fill="#c4d4f4" stroke="#2a50a0" stroke-width=".6"/><path d="M250,460 q2,-1 1.6,1.4 q-.2,.8 -1,1.4 M250.8,464.6 v.6" stroke="#444" stroke-width=".7"/><path d="M254.4,461 q3.6,-3 6.6,.4 q-3,3 -6.6,-.4 Z" fill="#eee" stroke="#444" stroke-width=".6"/><circle cx="257.6" cy="461.2" r=".9" fill="#444"/><path d="M258,463.4 q2,.6 2.6,2" stroke="#444" stroke-width=".6"/><circle cx="266.6" cy="461.4" r="1.3" stroke="#c8c8bc" stroke-width=".6"/><path d="M266,463 h1.2 v1.6 h-1.2 Z" stroke="#c8c8bc" stroke-width=".5"/><path d="M182.6,476.8 v-3.4 q0,-1.6 1.4,-1.6 M185.4,476.8 v-4 M187.6,476.8 v-3 q0,-1.4 -1.2,-1.4 M181.4,476.8 h7.4" stroke="#9a9a8e" stroke-width=".9"/><rect x="192.6" y="469.4" width="75" height="8" fill="#fff" stroke="#c6cad0" stroke-width=".6"/><path d="M262,472.4 l1.5,1.6 l1.5,-1.6" stroke="#b0b4ba" stroke-width=".8"/><rect x="272.4" y="469.8" width="7.4" height="7.2" fill="#c4c4b8" stroke="#b0b0a4" stroke-width=".5"/><rect x="282.8" y="469.8" width="7.6" height="7.2" fill="#d4d4ca" stroke="#b8b8ac" stroke-width=".5"/><path d="M284.6,475 h2.4 v-3.4 h2 v3.4" stroke="#8c8c82" stroke-width=".7"/><rect x="294.6" y="469.4" width="76.6" height="8" fill="#fff" stroke="#c6cad0" stroke-width=".6"/><path d="M365.6,472.4 l1.5,1.6 l1.5,-1.6" stroke="#b0b4ba" stroke-width=".8"/><rect x="508.4" y="470" width="5.8" height="5.8" fill="#fff" stroke="#1c5180" stroke-width=".6"/><path d="M509.6,472.8 l1.3,1.5 l2.2,-3" stroke="#21a121" stroke-width="1.1"/><path d="M575,470.4 h6.6 l-2.6,3 v3 l-1.4,-.8 v-2.2 Z" fill="#f4f6f8" stroke="#5a6a84" stroke-width=".6"/><rect x="596.6" y="174.6" width="14" height="48" fill="#fdfdfd" stroke="#b4b4b4" stroke-width=".5"/><path d="M606.2,176.6 l1.8,1.8 M608,176.6 l-1.8,1.8" stroke="#888" stroke-width=".5"/><circle cx="603.2" cy="187" r="5.2" fill="#f1f2f5" stroke="#777" stroke-width=".6"/><circle cx="603.2" cy="187" r="4.2" fill="#e4e8f2" stroke="#aab" stroke-width=".4"/><path d="M601.4,185 l2.4,-1 l1.6,1.4 v3.2 l-2.4,1.2 l-1.6,-1.6 Z" fill="#4f87e6" stroke="#2a5cc0" stroke-width=".4"/><path d="M601.4,185 l1.6,1.4 l2.4,-1 M603,186.4 v3.4" stroke="#cfe0ff" stroke-width=".4"/><path d="M602.4,195.4 h1.8 l-.9,1.2 Z M602.4,213.4 h1.8 l-.9,1.2 Z M606,218.6 h1.8 l-.9,1.2 Z" fill="#777"/><path d="M599.4,200 h8.6" stroke="#d4d4d4" stroke-width=".6"/><rect x="599.4" y="203" width="5" height="5" fill="#7ab86a" stroke="#4e8c44" stroke-width=".4"/><path d="M601,203 v5 M599.4,205 h5" stroke="#b6dca8" stroke-width=".4"/><circle cx="604.8" cy="207.6" r="1.6" fill="#f0f4fa" stroke="#555" stroke-width=".6"/><path d="M606,208.8 l1.4,1.6" stroke="#555" stroke-width=".7"/><ellipse cx="567.2" cy="148" rx="29.3" ry="12.6" fill="#ebebeb" opacity=".8"/><ellipse cx="567.4" cy="148.6" rx="24" ry="10.4" fill="#fefefe" stroke="#bdbdbd" stroke-width=".8"/><path d="M551,124 L566.5,119 L583.8,124 L568.4,130.6 Z" fill="#f3f3f3" stroke="#b2b2b2" stroke-width=".5"/><path d="M551,124 L568.4,130.6 V152.2 L552.1,145.6 Z" fill="#e2e2e2" stroke="#b2b2b2" stroke-width=".5"/><path d="M568.4,130.6 L583.8,124 L582.5,143.7 L568.4,152.2 Z" fill="#d6d6d6" stroke="#b2b2b2" stroke-width=".5"/><g font-family="Liberation Sans" stroke="none"><text transform="matrix(.47 .19 0 1 552.8 141)" font-size="7.2" fill="#7c7c7c">FRONTE</text><text transform="matrix(.4 -.21 0 1 570.2 145.6)" font-size="7.2" fill="#7c7c7c">DESTRA</text><text transform="matrix(-.7 -.1 .4 -.45 571.5 124.6)" font-size="4.4" fill="#a4a4a4">ALTO</text><text transform="translate(543,161.4) rotate(14)" font-size="5.8" fill="#8c8c8c">S</text><text transform="translate(591,158.6) rotate(-22)" font-size="5.8" fill="#8c8c8c">E</text><text transform="translate(544.4,141.4) rotate(-24)" font-size="5.2" fill="#b0b0b0">O</text><text transform="translate(584.4,139) rotate(24)" font-size="5.2" fill="#b0b0b0">N</text></g></g></svg>
<div class="t" style="left:167.00px;top:458.90px;font-size:5.23px;color:#222;">1 : 100</div>
<div class="t" style="left:1.60px;top:469.90px;font-size:5.14px;color:#222;">Fare clic per selezionare, premere TAB per alternare, CTRL per aggiungere e</div>
<div class="t" style="left:297.40px;top:469.80px;font-size:5.66px;color:#a0a49c;">Modello principale</div>
<div class="t" style="left:515.60px;top:469.90px;font-size:5.06px;color:#222;">Seleziona e trascina</div>
<div class="t" style="left:582.00px;top:470.40px;font-size:4.40px;color:#333;">:1</div>
<!--/BOTTOM-->
</div></body></html>
